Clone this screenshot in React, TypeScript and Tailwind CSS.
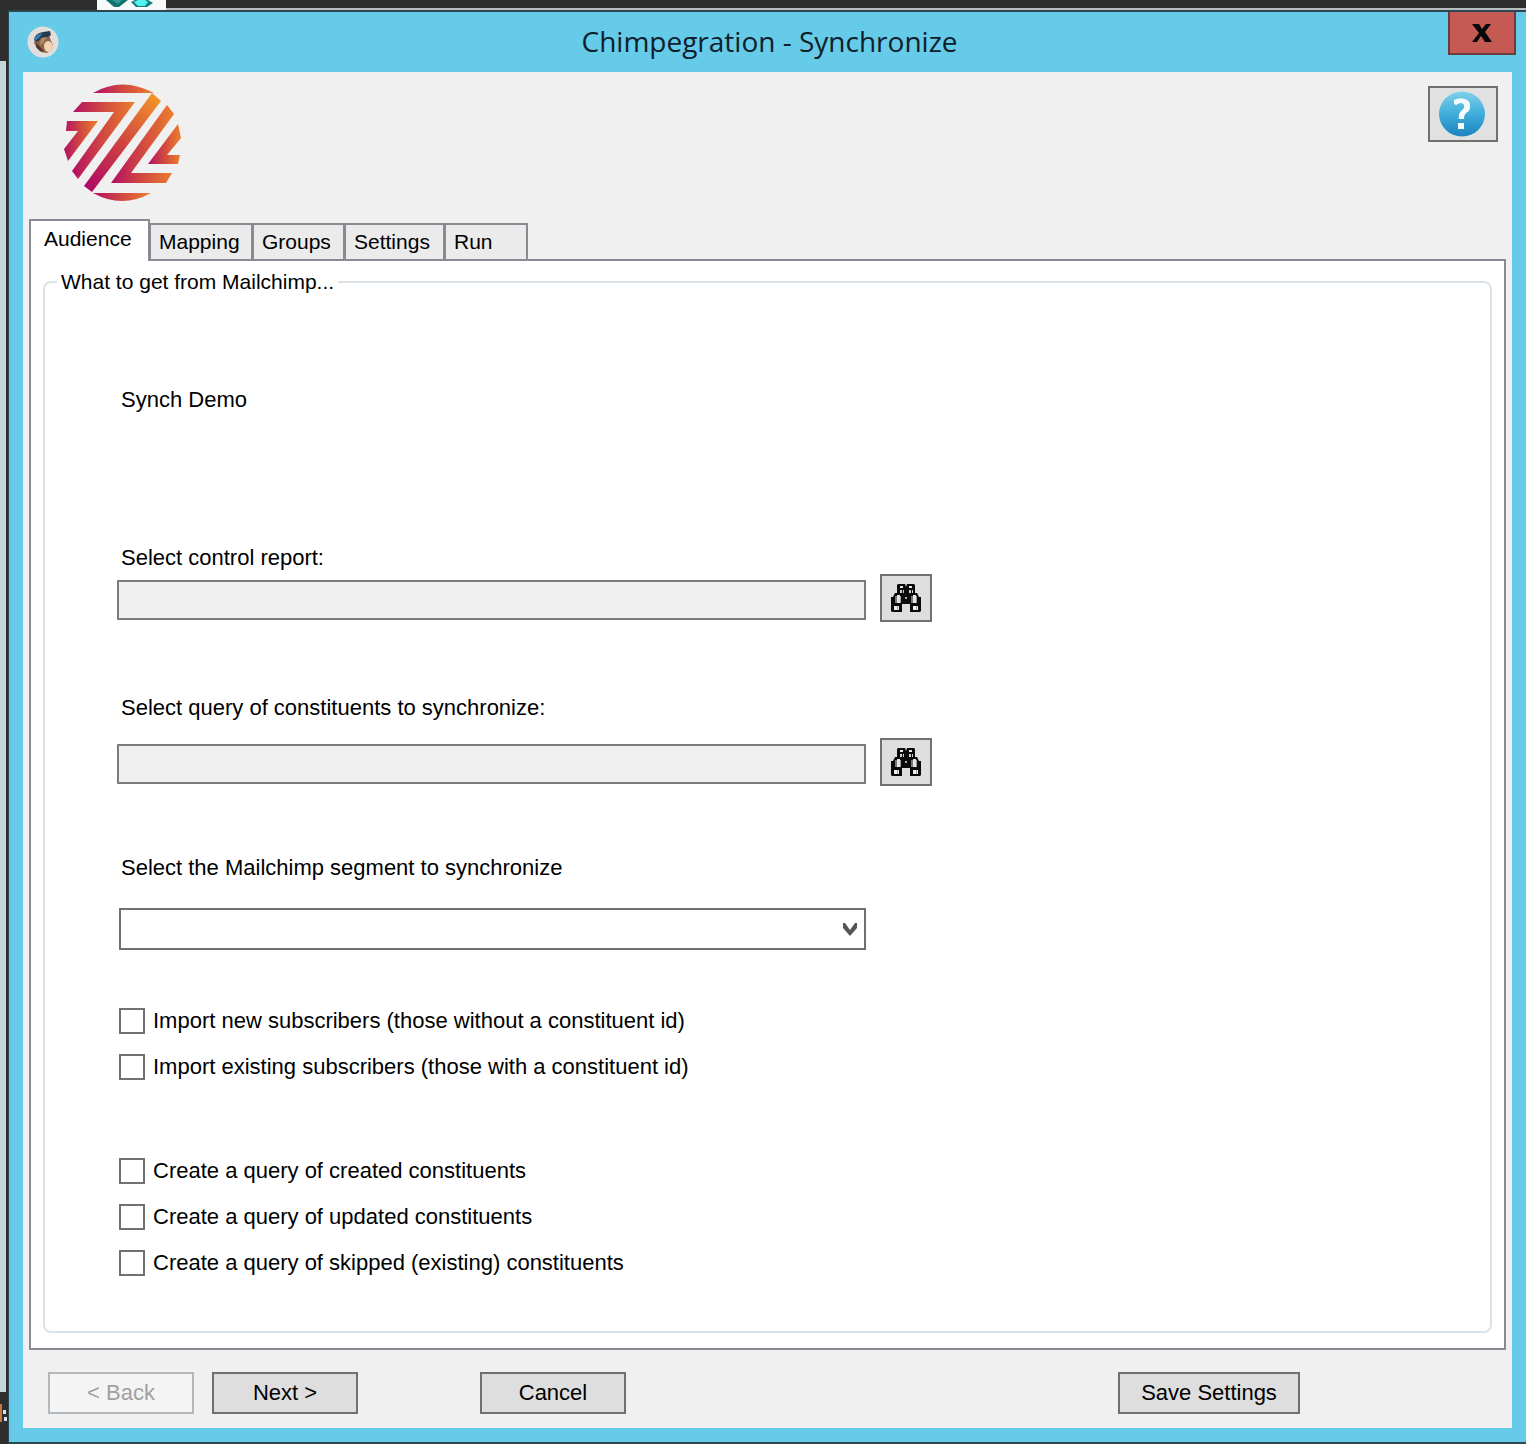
import { useState } from "react";

function BinocularsIcon() {
  return (
    <svg viewBox="0 0 30 28" className="h-7 w-[30px]" aria-hidden="true">
      <path
        d="M6 1l1-1h7l1 3 1-3h7l1 1v8h2l2 4h2v14l-1 1H19V20h-8v8H1l-1-1V13h2l2-4h2z"
        fill="#0a0a0a"
      />
      <path d="M9 2h3v2H9zM18 2h3v2h-3z" fill="#e8e8e8" />
      <path d="M9 6h2v3H9zM12 6h1v3h-1zM18 6h2v3h-2zM21 6h1v3h-1z" fill="#d0d0d0" />
      <path d="M4 12h2v7H4zM20 12h2v7h-2z" fill="#777" />
      <path d="M6 11h3v8H6zM22 11h3v8h-3z" fill="#e4e4e4" />
      <path d="M9 12h1v7H9zM25 12h1v7h-1z" fill="#999" />
      <path d="M14 13h2v2h-2z" fill="#aaa" />
      <path d="M3 22h5v4H3zM22 22h5v4h-5z" fill="#efefef" />
      <path d="M6 22h1v4H6zM25 22h1v4h-1z" fill="#aaa" />
    </svg>
  );
}

function CompanyLogo() {
  return (
    <svg viewBox="0 0 117 117" className="size-[117px]" aria-label="Company logo" role="img">
      <defs>
        <linearGradient id="warm" x1="0" y1="0" x2="1" y2="0">
          <stop offset="0" stopColor="#b30f63" />
          <stop offset="0.5" stopColor="#d14a40" />
          <stop offset="1" stopColor="#ec7f2c" />
        </linearGradient>
        <linearGradient id="bar" gradientUnits="userSpaceOnUse" x1="22" y1="105" x2="90" y2="12">
          <stop offset="0" stopColor="#ad0866" />
          <stop offset="0.5" stopColor="#cf4142" />
          <stop offset="1" stopColor="#f39328" />
        </linearGradient>
      </defs>
      <g fill="url(#warm)">
        <path d="M29 9Q58-8 90 9z" />
        <path d="M18 18H71L14 95 8 87 50 28H9z" />
        <path d="M3 37H34L4 77 0 65 14 47H2z" />
        <path d="M103 21L110 30 67 89H108L102 99H47z" />
        <path d="M114 40L117 54 103 71H116L114 80H84z" />
        <path d="M29 109H87Q58 125 29 109z" />
      </g>
      <path d="M88 9L97 17 28 108 20 102z" fill="url(#bar)" />
    </svg>
  );
}

function AppIcon() {
  return (
    <svg viewBox="0 0 32 32" className="size-8" aria-hidden="true">
      <circle cx="16" cy="16" r="15.5" fill="#e1dedc" />
      <path d="M8 13l6-4 8 0 2 6 2 4-1 5-5 3-6-1-4-4-3-5z" fill="#8d6548" />
      <path d="M17 19q1-4 5-4 4 2 4 6-1 5-5 5-4-1-4-7z" fill="#f0d4b4" />
      <path d="M7 14Q8 7 16 6l7-1 1 4-3 2-6 1-5 4z" fill="#27394e" />
      <path d="M7 13q3-6 9-6l-4 5-4 3z" fill="#3f78ad" />
      <path d="M14 12l6-1-4 6-3 3z" fill="#b58a63" />
      <path d="M9 17l5 5 3 4-4-1-4-4z" fill="#4c3529" />
    </svg>
  );
}

function HelpIcon() {
  return (
    <svg viewBox="0 0 48 46" className="h-[46px] w-12" aria-hidden="true">
      <defs>
        <linearGradient id="help" x1="0" y1="0" x2="0" y2="1">
          <stop offset="0" stopColor="#7fd0ea" />
          <stop offset="0.45" stopColor="#44b1dc" />
          <stop offset="1" stopColor="#1b83c2" />
        </linearGradient>
      </defs>
      <ellipse cx="23" cy="23" rx="23" ry="22.5" fill="url(#help)" />
      <path
        d="M15 9Q21 6 26 8q6 2 5 8 0 4-4 6-2 2-2 6h-5q-1-5 2-8 4-3 3-6-2-4-8 0l-2-1z"
        fill="#f3fbff"
      />
      <path d="M19 32h6v6h-6z" fill="#f3fbff" />
    </svg>
  );
}

function LookupField({ id, action }: { id: string; action: string }) {
  return (
    <div className="flex items-end gap-3.5">
      <div className="min-w-0 flex-1 py-0.5">
        <input
          id={id}
          type="text"
          readOnly
          className="block h-10 w-full border-2 border-[#7b7b7b] bg-[#f0f0f0] px-2 outline-none"
        />
      </div>
      <button
        type="button"
        aria-label={action}
        className="flex h-12 w-[52px] shrink-0 items-center justify-center border-2 border-[#717171] bg-[#dedede]"
      >
        <BinocularsIcon />
      </button>
    </div>
  );
}

function CheckOption({ label }: { label: string }) {
  return (
    <label className="flex min-h-7 items-center gap-2">
      <input
        type="checkbox"
        className="size-[26px] shrink-0 appearance-none border-2 border-[#707070] bg-white checked:bg-[#707070]"
      />
      <span>{label}</span>
    </label>
  );
}

const tabs = [
  { name: "Audience", width: "w-[121px]" },
  { name: "Mapping", width: "w-[104px]" },
  { name: "Groups", width: "w-[93px]" },
  { name: "Settings", width: "w-[101px]" },
  { name: "Run", width: "w-[84px]" },
];

const plainButton = "h-[42px] border-2 border-[#707070] bg-[#dedede] text-center";

export default function App() {
  const [active, setActive] = useState("Audience");

  return (
    <div className="flex min-h-screen flex-col bg-[#2d2d2d] font-['Liberation_Sans',Arial,sans-serif] text-[22px] leading-7 text-black">
      <div className="flex h-2.5 pl-[97px]">
        <svg viewBox="0 0 69 10" className="h-2.5 w-[69px] shrink-0" aria-hidden="true">
          <path d="M0 0h69v10H0z" fill="#f7fafa" />
          <path d="M9 0h22l-9 7h-5z" fill="#117370" />
          <path d="M15 0h10l-4 4z" fill="#2c9b94" />
          <path d="M34 2l4-2h13l5 3-6 4H39z" fill="#137c7c" />
          <path d="M37 2l4-2h7l3 2-3 4h-7z" fill="#51f3ef" />
        </svg>
        <div className="flex-1 self-end border-t-2 border-[#b9bec2]" />
      </div>

      <div className="flex flex-1">
        <div className="flex w-2 shrink-0 flex-col">
          <div className="h-[51px]" />
          <div className="mr-0.5 flex-1 bg-[#c4d6dc]" />
          <div className="h-[52px] pt-3">
            <svg viewBox="0 0 8 18" className="h-[18px] w-2" aria-hidden="true">
              <path d="M0 0h2v18H0z" fill="#c9763f" />
              <path d="M3 6h3v4H3zM4 13h3v4H4z" fill="#d5e5ee" />
            </svg>
          </div>
        </div>

        <main className="flex min-w-0 flex-1 flex-col border-y-2 border-l border-[#2e4650] bg-[#66cae9] px-3.5 pb-3.5">
          <header className="grid h-[60px] grid-cols-[1fr_auto_1fr] items-center pl-1">
            <AppIcon />
            <h1 className="pb-0.5 font-['Open_Sans','Noto_Sans',sans-serif] text-[28px] leading-9 text-[#10202a]">
              Chimpegration - Synchronize
            </h1>
            <button
              type="button"
              aria-label="Close"
              className="-mr-1 flex h-[43px] w-[68px] items-center justify-center self-start justify-self-end border-2 border-t-0 border-[#6d3b3c] bg-[#c45a53]"
            >
              <svg viewBox="0 0 20 18" className="h-[18px] w-5" aria-hidden="true">
                <path d="M0 0h7l3 5 4-5h5l-6 8 7 10h-7l-4-6-4 6H0l7-9z" fill="#080808" />
              </svg>
            </button>
          </header>

          <div className="flex flex-1 flex-col bg-[#f0f0f0] px-1.5 pb-3.5">
            <div className="flex items-start justify-between pt-3 pr-2 pb-[18px] pl-[35px]">
              <CompanyLogo />
              <button
                type="button"
                aria-label="Help"
                className="mt-0.5 flex h-14 w-[70px] items-center justify-center border-2 border-[#707070] bg-[#e1e1e1]"
              >
                <HelpIcon />
              </button>
            </div>

            <div role="tablist" className="relative z-10 -mb-0.5 flex items-end text-[21px]">
              {tabs.map((tab) => (
                <button
                  key={tab.name}
                  type="button"
                  role="tab"
                  id={`tab-${tab.name}`}
                  aria-selected={active === tab.name}
                  aria-controls="panel"
                  onClick={() => setActive(tab.name)}
                  className={`${tab.width} border-2 border-[#898b92] text-left ${
                    active === tab.name
                      ? "h-[42px] border-b-0 bg-white pb-1 pl-[13px]"
                      : "-ml-px h-[38px] bg-[#ebebeb] pl-2"
                  }`}
                >
                  {tab.name}
                </button>
              ))}
            </div>

            <section
              id="panel"
              role="tabpanel"
              aria-labelledby={`tab-${active}`}
              className="flex-1 border-2 border-[#898b92] bg-white px-3 pt-[7px] pb-3.5"
            >
              <fieldset className="min-w-0 rounded-lg border-2 border-[#dbe3e9] pb-[54px] pl-[72px]">
                <legend className="-ml-[60px] px-1 text-[21px]">What to get from Mailchimp...</legend>

                <div className="max-w-[815px] pt-[90px]">
                  <p className="pl-1">Synch Demo</p>

                  <label htmlFor="report" className="mt-[130px] mb-0.5 block pl-1">
                    Select control report:
                  </label>
                  <LookupField id="report" action="Find control report" />

                  <label htmlFor="query" className="mt-[72px] mb-4 block pl-1">
                    Select query of constituents to synchronize:
                  </label>
                  <LookupField id="query" action="Find query" />

                  <label htmlFor="segment" className="mt-[68px] mb-[26px] block pl-1">
                    Select the Mailchimp segment to synchronize
                  </label>
                  <div className="relative mr-[66px] ml-0.5">
                    <select
                      id="segment"
                      className="block h-[42px] w-full appearance-none border-2 border-[#707070] bg-white pr-8 pl-2"
                    >
                      <option value="" />
                    </select>
                    <svg
                      viewBox="0 0 16 14"
                      className="pointer-events-none absolute top-3.5 right-2 h-3.5 w-4"
                      aria-hidden="true"
                    >
                      <path d="M1 1v5l7 8 7-8V1h-2L8 8 3 1z" fill="#555" />
                    </svg>
                  </div>

                  <div className="mt-[57px] ml-0.5 flex flex-col gap-[18px]">
                    <CheckOption label="Import new subscribers (those without a constituent id)" />
                    <CheckOption label="Import existing subscribers (those with a constituent id)" />
                  </div>
                  <div className="mt-[76px] ml-0.5 flex flex-col gap-[18px]">
                    <CheckOption label="Create a query of created constituents" />
                    <CheckOption label="Create a query of updated constituents" />
                    <CheckOption label="Create a query of skipped (existing) constituents" />
                  </div>
                </div>
              </fieldset>
            </section>

            <footer className="flex pt-[22px] pr-[206px] pl-[19px]">
              <button
                type="button"
                disabled
                className="h-[42px] w-[146px] border-2 border-[#b2b8bb] bg-[#f4f4f4] text-center text-[#a0a0a0]"
              >
                &lt; Back
              </button>
              <button type="button" className={`${plainButton} ml-[18px] w-[146px]`}>
                Next &gt;
              </button>
              <button type="button" className={`${plainButton} ml-[122px] w-[146px]`}>
                Cancel
              </button>
              <button type="button" className={`${plainButton} ml-auto w-[182px]`}>
                Save Settings
              </button>
            </footer>
          </div>
        </main>
      </div>
    </div>
  );
}
